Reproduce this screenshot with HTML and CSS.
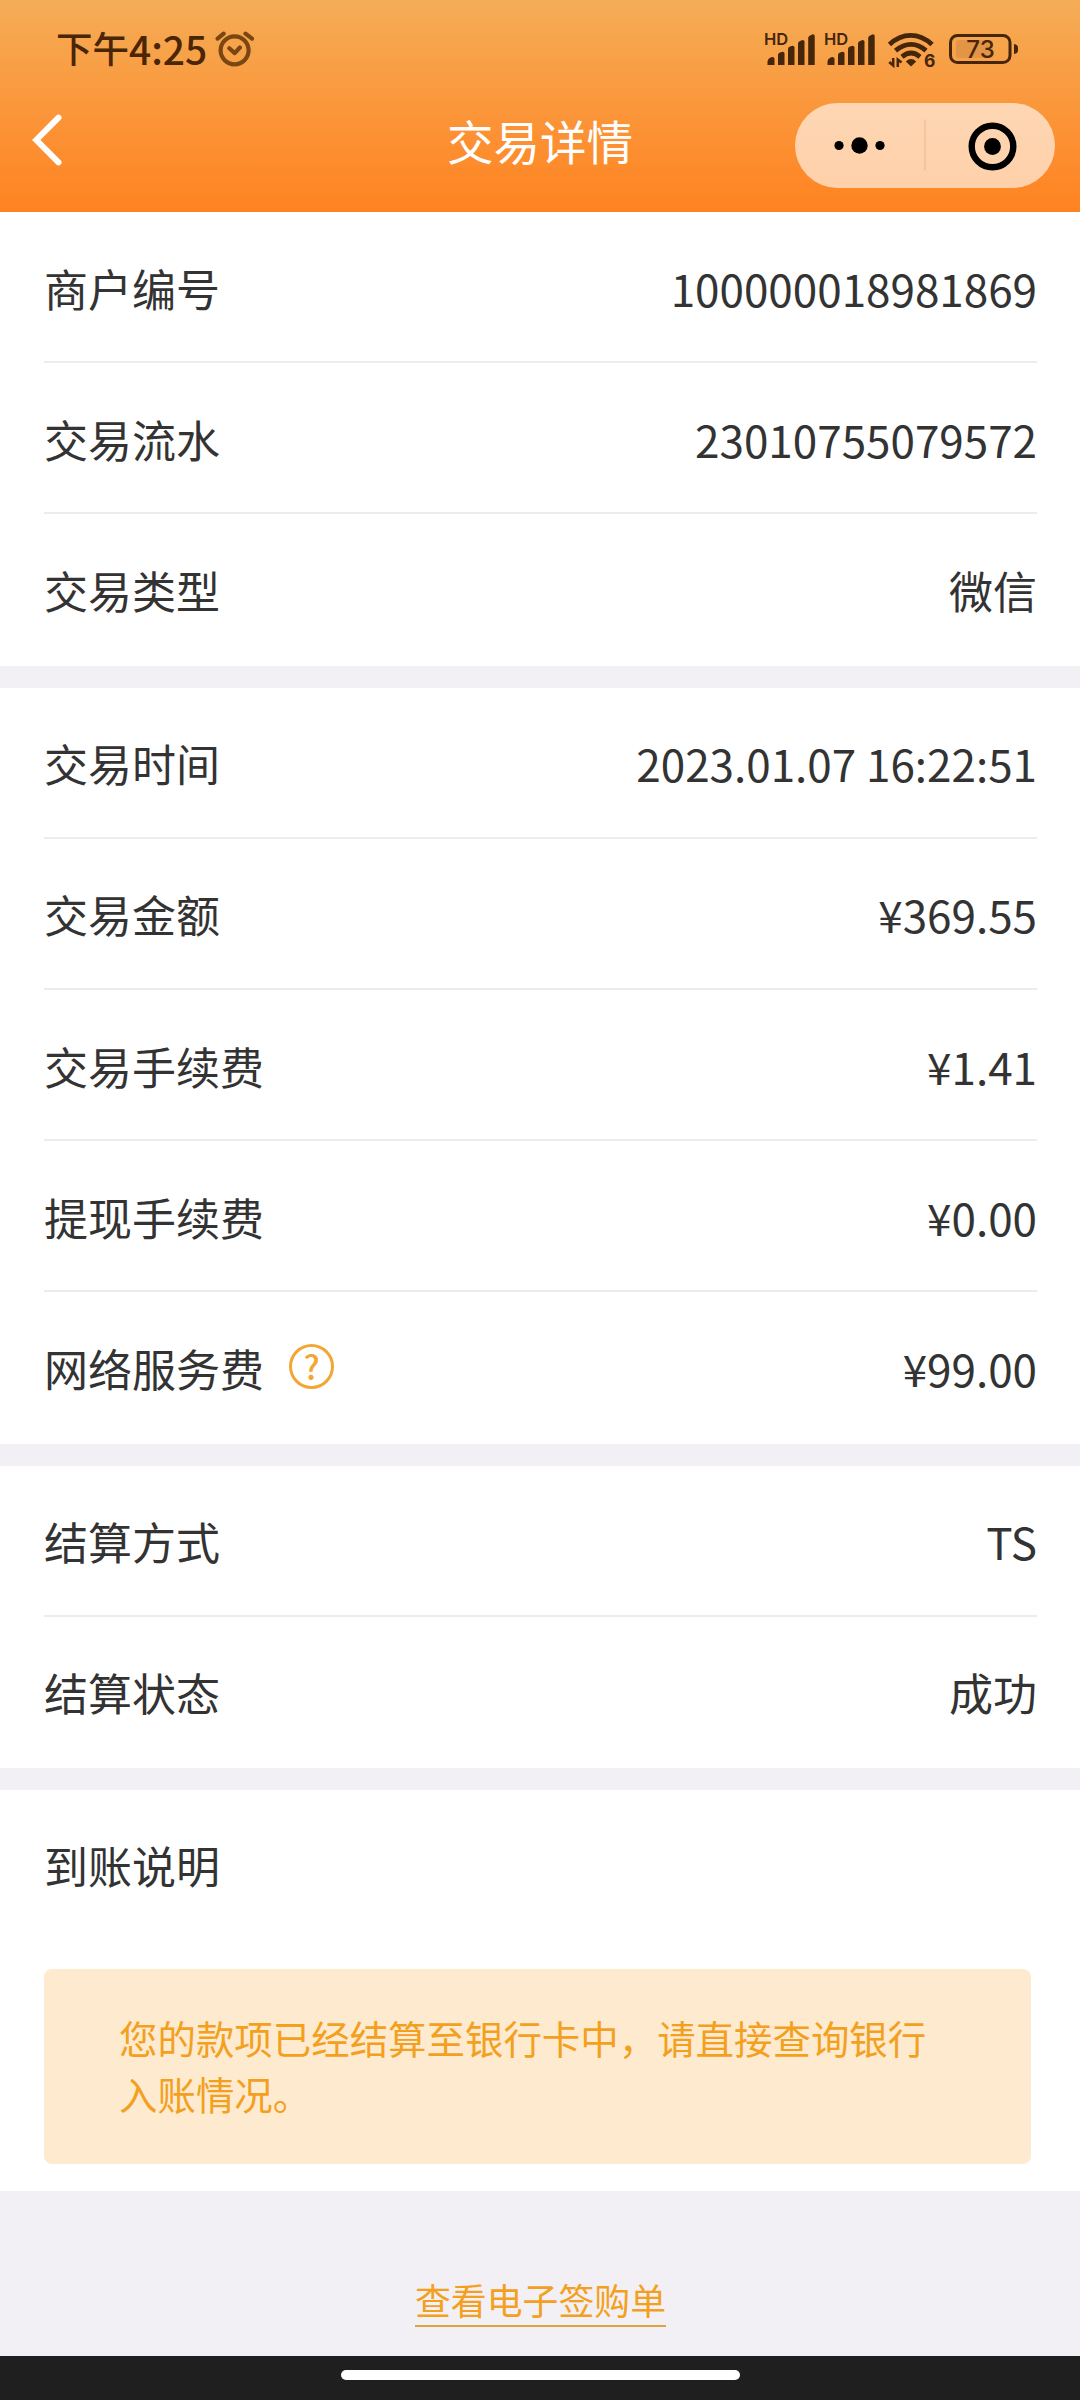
FILE: index.html
```html
<!DOCTYPE html>
<html lang="zh-CN">
<head>
<meta charset="utf-8">
<title>交易详情</title>
<link rel="stylesheet" href="styles.css">
</head>
<body>
<div class="screen">
  <header class="header">
    <div class="status">
      <div class="clock"><span>下午</span><span class="digits">4:25</span>
        <svg class="alarm" width="40" height="38" viewBox="214 30 40 38" fill="none" stroke="#7a4612" stroke-width="4.2" stroke-linecap="round" stroke-linejoin="round">
          <circle cx="234.6" cy="50.3" r="14"/>
          <path d="M229.3 48.3l5.4 4.8 5.2-5.600M217.6 38.600l6-5M252 38.600l-6.500-5"/>
        </svg>
      </div>
      <svg class="indicators" width="264" height="50" viewBox="760 24 264 50" fill="#46260a">
        <g id="signal">
          <text class="hd" x="764" y="45">HD</text>
          <path d="M767.5 65V61.500q0-2.500 3-4l2-.6q2 0 2 2V65ZM778 65V55q0-2 2-2.500l2.500-.7q2 0 2 1.500V65ZM788 65V49q0-2 2-2.500l2.500-.7q2 0 2 1.500V65ZM798 65V43.500q0-2 2-2.500l2.500-.9q2 0 2 1.500V65ZM808.200 65V38q0-2 2-2.500l2.500-1.200q2 0 2 1.500V65Z"/>
        </g>
        <use href="#signal" x="60"/>
        <g fill="none" stroke="#46260a" stroke-width="4.800">
          <path d="M889.500 44.500Q899 35.300 910.700 35.300T932 44.500M895.500 50.600Q903 44.300 911 44.300T926 50.600M902 56.800Q906.500 53 911 53T920 56.800"/>
        </g>
        <path d="M905.800 61.500Q911 56.600 916.200 61.500L911 66.500Z"/>
        <path d="M893.200 58V65.500L889.200 62M897.800 67V59.500L901.500 62.500" fill="none" stroke="#46260a" stroke-width="2.500"/>
        <text class="gen" x="924" y="66.700">6</text>
        <rect x="956" y="40" width="37" height="18" rx="3" fill="#e39547"/>
        <rect x="950.500" y="35.500" width="59.500" height="27" rx="7" fill="none" stroke="#46260a" stroke-width="3"/>
        <path d="M1014 44q4 .5 4 3.500v3q0 3-4 3.500Z"/>
        <text class="level" x="980.500" y="57.600">73</text>
      </svg>
    </div>
    <div class="navbar">
      <svg class="back" width="34" height="56" viewBox="30 112 34 56" fill="none" stroke="#fff" stroke-width="6" stroke-linecap="round"><path d="M58.500 117.700L36.300 140l22.200 22.300"/></svg>
      <h1 class="title">交易详情</h1>
      <div class="capsule">
        <svg width="260" height="85" viewBox="795.500 102.500 260 85">
          <circle cx="839.500" cy="145" r="4.600"/><circle cx="860" cy="145" r="8.200"/><circle cx="880.500" cy="145" r="4.600"/>
          <path d="M925.500 119v51" stroke="#e9b68c"/>
          <circle cx="993" cy="146" r="20.800" fill="none" stroke="#000" stroke-width="6.400"/><circle cx="993" cy="146" r="8.400"/>
        </svg>
      </div>
    </div>
  </header>

  <section class="group">
    <div class="row"><span>商户编号</span><span>100000018981869</span></div>
    <div class="row"><span>交易流水</span><span>23010755079572</span></div>
    <div class="row"><span>交易类型</span><span>微信</span></div>
  </section>

  <section class="group">
    <div class="row"><span>交易时间</span><span>2023.01.07 16:22:51</span></div>
    <div class="row"><span>交易金额</span><span>¥369.55</span></div>
    <div class="row"><span>交易手续费</span><span>¥1.41</span></div>
    <div class="row"><span>提现手续费</span><span>¥0.00</span></div>
    <div class="row"><span class="with-help">网络服务费<i class="help">?</i></span><span>¥99.00</span></div>
  </section>

  <section class="group">
    <div class="row"><span>结算方式</span><span>TS</span></div>
    <div class="row"><span>结算状态</span><span>成功</span></div>
  </section>

  <section class="group arrival">
    <div class="row"><span>到账说明</span></div>
    <p class="notice">您的款项已经结算至银行卡中，请直接查询银行入账情况。</p>
  </section>

  <footer class="footer"><a class="receipt">查看电子签购单</a></footer>
  <div class="homebar"><div class="handle"></div></div>
</div>
</body>
</html>
```
FILE: styles.css
```css
* { box-sizing: border-box; }
body {
  margin: 0;
  background: #f2f0f4;
  color: #333;
  font-family: "Noto Sans CJK SC", sans-serif;
}
.screen {
  display: flex;
  flex-direction: column;
  width: 1080px;
  height: 2400px;
  overflow: hidden;
}
.header {
  flex: none;
  height: 212px;
  background: linear-gradient(#f4ad57, #fb963a 52%, #ff8320);
}
.status {
  display: flex;
  justify-content: space-between;
  height: 98px;
  padding: 24px 56px 0 56px;
}
.clock {
  display: flex;
  align-items: center;
  height: 50px;
  color: #4a2506;
  font-size: 36.500px;
  font-weight: 500;
  line-height: 46px;
}
.clock span { margin-top: -3px; }
.digits { font-size: 39px; }
.alarm { margin-left: 7px; }
.indicators { flex: none; }
.hd { font: 600 16.500px Inter, sans-serif; }
.gen { font: 700 17.500px Inter, sans-serif; }
.level { font: 500 24px Inter, sans-serif; text-anchor: middle; }
.navbar {
  display: grid;
  grid-template-columns: 260px 1fr 260px;
  align-items: center;
  height: 94px;
  padding: 0 25px 0 30px;
}
.back { margin-bottom: 10px; }
.title {
  margin: 0 0 11px -5px;
  color: #fff;
  font-size: 46.500px;
  font-weight: 400;
  line-height: 60px;
  text-align: center;
}
.capsule {
  height: 85px;
  border-radius: 43px;
  background: rgba(255, 255, 255, .61);
}
.capsule svg { display: block; }
.group {
  flex: none;
  margin-bottom: 22px;
  padding: 0 43px 0 44px;
  background: #fff;
}
.row {
  display: flex;
  align-items: center;
  justify-content: space-between;
  height: 151.200px;
  padding-top: 2px;
  border-bottom: 2px solid #ececec;
  font-size: 44px;
  line-height: 60px;
}
.row:last-child, .arrival .row { border-bottom-color: transparent; }
.with-help { display: flex; align-items: center; }
.help {
  width: 45px;
  height: 45px;
  margin: -2px 0 0 25px;
  border: 3px solid #f2a735;
  border-radius: 50%;
  color: #f2a735;
  font: 500 33px/38px "Noto Sans CJK SC", sans-serif;
  text-align: center;
}
.arrival {
  height: 401px;
  margin-bottom: 0;
}
.notice {
  width: 987px;
  height: 195px;
  margin: 27.500px 0 0;
  padding: 40px 75px;
  border-radius: 8px;
  background: #feebcf;
  color: #f3a01f;
  font-size: 38.450px;
  line-height: 56.300px;
}
.footer {
  display: flex;
  flex: 1;
  align-items: flex-end;
  justify-content: center;
  padding: 0 0 29px 1px;
}
.receipt {
  padding-bottom: 1px;
  border-bottom: 2px solid #dfa440;
  color: #f3a01f;
  font-size: 35.860px;
  line-height: 50px;
}
.homebar {
  display: flex;
  flex: none;
  align-items: center;
  justify-content: center;
  height: 44px;
  padding-bottom: 6px;
  background: #1f1f1f;
}
.handle {
  width: 399px;
  height: 10px;
  border-radius: 5px;
  background: #fff;
}
```
